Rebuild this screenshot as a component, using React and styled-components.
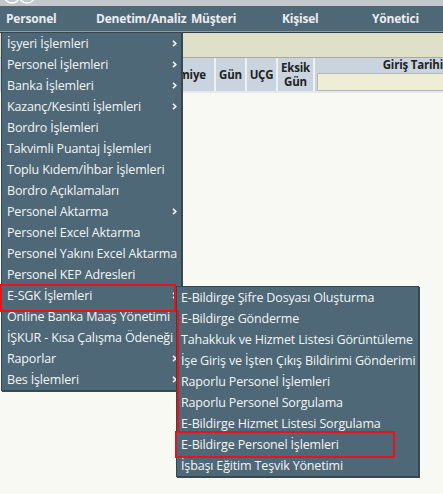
import React from "react";
import styled, { createGlobalStyle } from "styled-components";

const GlobalStyle = createGlobalStyle`
  html, body { margin: 0; padding: 0; background: #f9f9f4; }
  body { font-family: "Open Sans", "Noto Sans", sans-serif; }
  * { box-sizing: border-box; }
`;

const Page = styled.div`
  position: relative;
  width: 443px;
  height: 494px;
  overflow: hidden;
  background: #f9f9f4;
`;

const TopStrip = styled.div`
  height: 6px;
  background: #c4c8cc;
  display: flex;
  align-items: flex-start;
`;

const NavBar = styled.nav`
  height: 26px;
  background: #4e6877;
  border-bottom: 1px solid #8d9ba4;
  display: flex;
  align-items: center;
`;

const NavItem = styled.div`
  width: ${(p) => p.$w}px;
  padding-left: 6px;
  color: #e9edf0;
  font-weight: 700;
  font-size: 12px;
  white-space: nowrap;
  letter-spacing: -0.2px;
`;

const FilterBand = styled.div`
  height: 26px;
  background: #dfe0c9;
  border-top: 1px solid #2f3f48;
  border-bottom: 1px solid #a8aaa0;
`;

const HeaderRow = styled.div`
  display: flex;
  height: 35px;
  background: #c9d4de;
  border-bottom: 2px solid #e6e9ec;
`;

const HeadCell = styled.div`
  width: ${(p) => p.$w}px;
  flex: ${(p) => (p.$grow ? "1" : "none")};
  border-right: ${(p) => (p.$last ? "none" : "2px solid #eef1f4")};
  display: flex;
  flex-direction: column;
  align-items: ${(p) => (p.$right ? "flex-end" : "center")};
  justify-content: center;
  font-weight: 700;
  font-size: 11.5px;
  line-height: 13px;
  color: #222;
  text-align: center;
  letter-spacing: -0.2px;
`;

const HeadLine = styled.span`
  display: block;
  line-height: 14px;
`;

const DateInput = styled.div`
  margin-top: 2px;
  align-self: stretch;
  height: 19px;
  margin-left: 2px;
  background: #eeeed6;
  border: 1px solid #b4b8bb;
  border-right: none;
`;

const Menu = styled.ul`
  position: absolute;
  left: ${(p) => p.$x}px;
  top: ${(p) => p.$y}px;
  width: ${(p) => p.$w}px;
  margin: 0;
  padding: 0;
  list-style: none;
  background: #4e6877;
  border: 1px solid #36464f;
  box-shadow: 1px 1px 0 #3a4a53;
`;

const MenuItem = styled.li`
  height: 21px;
  display: flex;
  align-items: center;
  justify-content: space-between;
  padding: 0 ${(p) => (p.$pr ? p.$pr : 4)}px 0 ${(p) => p.$pl}px;
  color: #f3f5f6;
  font-size: 12.5px;
  white-space: nowrap;
  letter-spacing: -0.15px;
`;

const Chevron = () => (
  <svg width="5" height="7" viewBox="0 0 5 7">
    <path d="M1 0.8 L3.8 3.5 L1 6.2" fill="none" stroke="#f3f5f6" strokeWidth="1.6" />
  </svg>
);

const Annot = styled.div`
  position: absolute;
  left: ${(p) => p.$x}px;
  top: ${(p) => p.$y}px;
  width: ${(p) => p.$w}px;
  height: ${(p) => p.$h}px;
  border: 2px solid #e8141b;
  ${(p) => p.$line && "border-top: none; border-left: none; border-bottom: none;"}
`;

const mainItems = [
  ["İşyeri İşlemleri", true],
  ["Personel İşlemleri", true],
  ["Banka İşlemleri", true],
  ["Kazanç/Kesinti İşlemleri", true],
  ["Bordro İşlemleri", false],
  ["Takvimli Puantaj İşlemleri", false],
  ["Toplu Kıdem/İhbar İşlemleri", false],
  ["Bordro Açıklamaları", false],
  ["Personel Aktarma", true],
  ["Personel Excel Aktarma", false],
  ["Personel Yakını Excel Aktarma", false],
  ["Personel KEP Adresleri", false],
  ["E-SGK İşlemleri", true],
  ["Online Banka Maaş Yönetimi", false],
  ["İŞKUR - Kısa Çalışma Ödeneği", false],
  ["Raporlar", true],
  ["Bes İşlemleri", true],
];

const subItems = [
  "E-Bildirge Şifre Dosyası Oluşturma",
  "E-Bildirge Gönderme",
  "Tahakkuk ve Hizmet Listesi Görüntüleme",
  "İşe Giriş ve İşten Çıkış Bildirimi Gönderimi",
  "Raporlu Personel İşlemleri",
  "Raporlu Personel Sorgulama",
  "E-Bildirge Hizmet Listesi Sorgulama",
  "E-Bildirge Personel İşlemleri",
  "İşbaşı Eğitim Teşvik Yönetimi",
];

const navItems = [
  ["Personel", 90],
  ["Denetim/Analiz", 95],
  ["Müşteri", 91],
  ["Kişisel", 90],
  ["Yönetici", 77],
];

export default function App() {
  return (
    <Page>
      <GlobalStyle />
      <TopStrip>
        <svg width="40" height="6" viewBox="0 0 40 6">
          <ellipse cx="12" cy="-3" rx="7" ry="6" fill="none" stroke="#fff" strokeWidth="1.6" />
          <ellipse cx="27" cy="-3" rx="7" ry="6" fill="none" stroke="#fff" strokeWidth="1.6" />
        </svg>
      </TopStrip>
      <NavBar>
        {navItems.map(([t, w]) => (
          <NavItem key={t} $w={w}>{t}</NavItem>
        ))}
      </NavBar>
      <FilterBand />
      <HeaderRow>
        <HeadCell $w={148} />
        <HeadCell $w={68}>İkramiye</HeadCell>
        <HeadCell $w={31}>Gün</HeadCell>
        <HeadCell $w={31}>UÇG</HeadCell>
        <HeadCell $w={37}>
          <HeadLine>Eksik</HeadLine>
          <HeadLine>Gün</HeadLine>
        </HeadCell>
        <HeadCell $grow $last $right>
          <span>Giriş Tarihi</span>
          <DateInput />
        </HeadCell>
      </HeaderRow>

      <Menu $x={1} $y={32} $w={181}>
        {mainItems.map(([t, sub]) => (
          <MenuItem key={t} $pl={5} $pr={4}>
            <span>{t}</span>
            {sub && <Chevron />}
          </MenuItem>
        ))}
      </Menu>

      <Menu $x={176} $y={286} $w={243}>
        {subItems.map((t) => (
          <MenuItem key={t} $pl={4}>
            <span>{t}</span>
          </MenuItem>
        ))}
      </Menu>

      <Annot $x={0} $y={284} $w={176} $h={28} />
      <Annot $x={174} $y={310} $w={5} $h={122} $line />
      <Annot $x={175} $y={431} $w={220} $h={27} />
    </Page>
  );
}
